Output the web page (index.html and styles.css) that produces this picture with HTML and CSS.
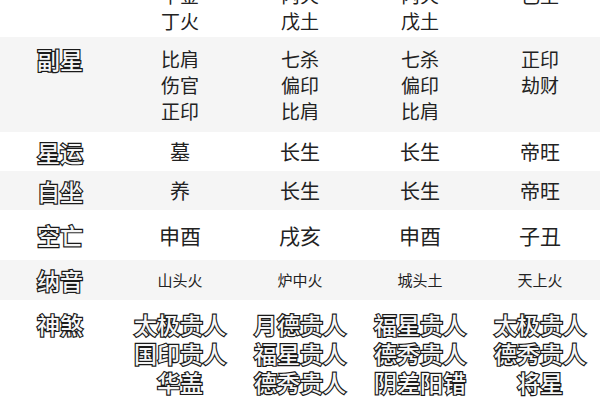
FILE: index.html
```html
<!DOCTYPE html>
<html lang="zh">
<head>
<meta charset="utf-8">
<link rel="stylesheet" href="styles.css">
</head>
<body>
<div class="viewport">
  <div class="chart">
    <div class="row r-hidden">
      <div class="label">藏干</div>
      <div class="cell"><span>戊土</span><span>辛金</span><span>丁火</span></div>
      <div class="cell"><span>甲木</span><span>丙火</span><span>戊土</span></div>
      <div class="cell"><span>甲木</span><span>丙火</span><span>戊土</span></div>
      <div class="cell"><span>丁火</span><span>己土</span></div>
    </div>
    <div class="row gray r-sub">
      <div class="label">副星</div>
      <div class="cell"><span>比肩</span><span>伤官</span><span>正印</span></div>
      <div class="cell"><span>七杀</span><span>偏印</span><span>比肩</span></div>
      <div class="cell"><span>七杀</span><span>偏印</span><span>比肩</span></div>
      <div class="cell"><span>正印</span><span>劫财</span></div>
    </div>
    <div class="row r-one">
      <div class="label">星运</div>
      <div class="cell">墓</div>
      <div class="cell">长生</div>
      <div class="cell">长生</div>
      <div class="cell">帝旺</div>
    </div>
    <div class="row gray r-one">
      <div class="label">自坐</div>
      <div class="cell">养</div>
      <div class="cell">长生</div>
      <div class="cell">长生</div>
      <div class="cell">帝旺</div>
    </div>
    <div class="row r-void">
      <div class="label">空亡</div>
      <div class="cell">申酉</div>
      <div class="cell">戌亥</div>
      <div class="cell">申酉</div>
      <div class="cell">子丑</div>
    </div>
    <div class="row gray r-nayin">
      <div class="label">纳音</div>
      <div class="cell">山头火</div>
      <div class="cell">炉中火</div>
      <div class="cell">城头土</div>
      <div class="cell">天上火</div>
    </div>
    <div class="row r-gods">
      <div class="label">神煞</div>
      <div class="cell"><span>太极贵人</span><span>国印贵人</span><span>华盖</span></div>
      <div class="cell"><span>月德贵人</span><span>福星贵人</span><span>德秀贵人</span></div>
      <div class="cell"><span>福星贵人</span><span>德秀贵人</span><span>阴差阳错</span></div>
      <div class="cell"><span>太极贵人</span><span>德秀贵人</span><span>将星</span></div>
    </div>
  </div>
</div>
</body>
</html>
```
FILE: styles.css
```css
* { box-sizing: border-box; }
html, body {
  margin: 0;
  padding: 0;
  background: #ffffff;
}
body {
  font-family: "Noto Sans CJK SC", "Noto Sans", sans-serif;
  color: #222222;
}
.viewport {
  width: 600px;
  height: 400px;
  overflow: hidden;
}
.chart {
  margin-top: -53px;
  display: flex;
  flex-direction: column;
}
.row {
  display: grid;
  grid-template-columns: repeat(5, 120px);
  align-items: start;
}
.gray { background: #f5f5f5; }
.outlined {
  font-weight: 500;
  color: #f6f6f6;
  -webkit-text-stroke: 2.4px #1a1a1a;
  paint-order: stroke fill;
}
.label {
  text-align: center;
  font-size: 23px;
  line-height: 26px;
  font-weight: 500;
  color: #f6f6f6;
  -webkit-text-stroke: 2.4px #1a1a1a;
  paint-order: stroke fill;
}
.cell {
  display: flex;
  flex-direction: column;
  align-items: center;
  font-size: 19px;
  line-height: 26px;
}
.r-sub { padding: 9px 0 8px; }
.r-hidden { padding: 9px 0 3px; }
.r-one { padding: 7px 0 6px; align-items: center; }
.r-one .cell { font-size: 20px; }
.r-void { padding: 12px 0 12px; align-items: center; }
.r-void .cell { font-size: 21px; }
.r-nayin { padding: 7px 0 7px; align-items: center; }
.r-nayin .cell { font-size: 15px; }
.r-gods { padding: 10px 0 8px; }
.r-gods .cell {
  font-size: 23px;
  line-height: 29px;
  font-weight: 500;
  color: #f6f6f6;
  -webkit-text-stroke: 2.4px #1a1a1a;
  paint-order: stroke fill;
}
.r-gods .label { line-height: 29px; }
```
